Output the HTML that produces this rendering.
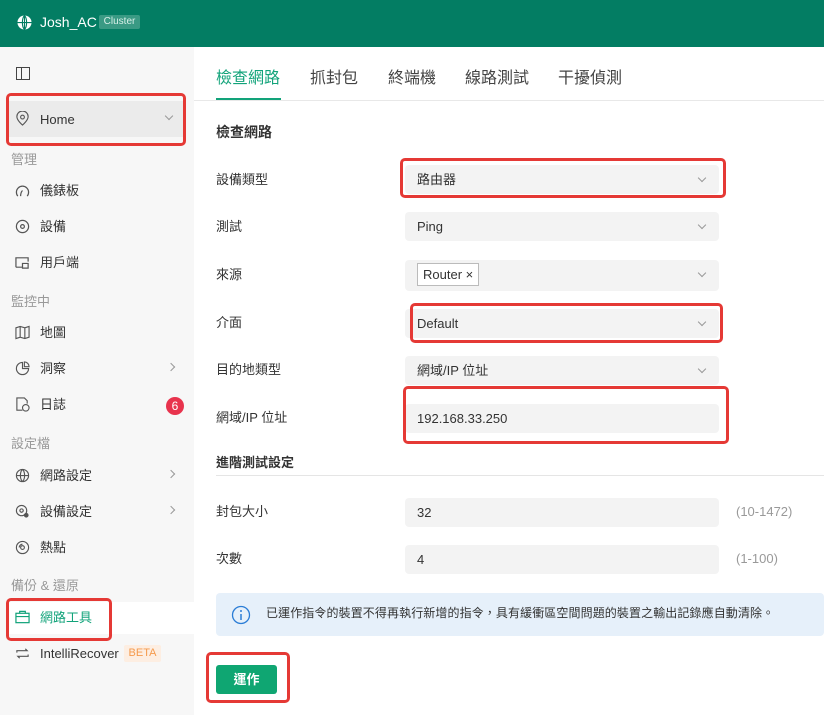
<!DOCTYPE html>
<html><head><meta charset="utf-8"><style>
*{box-sizing:border-box;margin:0;padding:0}
body{width:824px;height:715px;overflow:hidden;font-family:"Liberation Sans","Noto Sans CJK TC",sans-serif;color:#333;background:#fff;position:relative;font-size:13px;line-height:15px}
.a{position:absolute;white-space:nowrap}
.hdr{left:0;top:0;width:824px;height:47px;background:#037d63;color:#fff}
.side{left:0;top:47px;width:194px;height:668px;background:#f7f7f7}
.grp{left:11px;color:#999;font-size:13px}
.it{left:40px;font-size:13px;color:#333}
.ic{left:15px;width:15px;height:15px}
.red{border:3px solid #e53935;border-radius:5px}
.lbl{left:216px;font-size:13px;color:#333}
.fld{left:405px;width:314px;height:29px;background:#f3f3f3;border-radius:4px;padding:0 12px;line-height:29px;font-size:13px;color:#333}
.dd::after{content:"";position:absolute;right:14px;top:10px;width:5px;height:5px;border-right:1px solid #999;border-bottom:1px solid #999;transform:rotate(45deg)}
.tab{top:71px;font-size:16px;color:#444}
</style></head><body>
<div class="a hdr">
 <svg class="a" style="left:17px;top:15px" width="15" height="15" viewBox="0 0 16 16"><circle cx="8" cy="8" r="7.5" fill="#fff"/><path d="M8 .5v15M.5 8h15M8 .5c-3 3-3 12 0 15M8 .5c3 3 3 12 0 15" stroke="#037d63" stroke-width="1.2" fill="none"/></svg>
 <div class="a" style="left:40px;top:15px;font-size:14px">Josh_AC</div>
 <div class="a" style="left:99px;top:15px;height:14px;width:41px;background:#3a9a84;border-radius:2px;font-size:10px;line-height:14px;text-align:center;color:#d8efe8;display:flex;align-items:center;justify-content:center">Cluster</div>
</div>
<div class="a side"></div>
<svg class="a" style="left:16px;top:67px" width="14" height="13"><rect x=".5" y=".5" width="13" height="12" fill="none" stroke="#444"/><line x1="5.5" y1="0" x2="5.5" y2="13" stroke="#444"/></svg>
<div class="a" style="left:9px;top:101px;width:174px;height:36px;background:#ebebeb"></div>
<svg class="a ic" style="top:111px" viewBox="0 0 16 16"><path d="M8 15s-6-5-6-9a6 6 0 0112 0c0 4-6 9-6 9z" fill="none" stroke="#555" stroke-width="1.2"/><circle cx="8" cy="6.5" r="2" fill="none" stroke="#555" stroke-width="1.2"/></svg>
<div class="a it" style="top:112px">Home</div>
<div class="a" style="left:166px;top:113px;width:6px;height:6px;border-right:1px solid #999;border-bottom:1px solid #999;transform:rotate(45deg)"></div>
<div class="a red" style="left:6px;top:93px;width:180px;height:53px"></div>
<div class="a grp" style="top:152px">管理</div>
<svg class="a ic" style="top:183px" viewBox="0 0 16 16"><path d="M3 14A6.5 6.5 0 1113 14M6 14c0-3 1-5 2-6" fill="none" stroke="#555" stroke-width="1.3"/></svg><div class="a it" style="top:183px">儀錶板</div>
<svg class="a ic" style="top:219px" viewBox="0 0 16 16"><circle cx="8" cy="8" r="6.5" fill="none" stroke="#555" stroke-width="1.3"/><circle cx="8" cy="8" r="2" fill="none" stroke="#555" stroke-width="1.3"/></svg><div class="a it" style="top:219px">設備</div>
<svg class="a ic" style="top:255px" viewBox="0 0 16 16"><path d="M1 13V3h13v4M1 13h7M8 9h6v5H8z" fill="none" stroke="#555" stroke-width="1.3"/></svg><div class="a it" style="top:255px">用戶端</div>
<div class="a grp" style="top:294px">監控中</div>
<svg class="a ic" style="top:325px" viewBox="0 0 16 16"><path d="M1 3l4.5-1.5 5 1.5 4.5-1.5v11.5l-4.5 1.5-5-1.5L1 14.5zM5.5 1.5v11.5M10.5 3v11.5" fill="none" stroke="#555" stroke-width="1.2"/></svg><div class="a it" style="top:325px">地圖</div>
<svg class="a ic" style="top:361px" viewBox="0 0 16 16"><path d="M8 1.5A6.5 6.5 0 1014.5 8H8z" fill="none" stroke="#555" stroke-width="1.2"/><path d="M10 1v5h5a5 5 0 00-5-5z" fill="none" stroke="#555" stroke-width="1.2"/></svg><div class="a it" style="top:361px">洞察</div>
<div class="a" style="left:168px;top:364px;width:6px;height:6px;border-right:1px solid #999;border-top:1px solid #999;transform:rotate(45deg)"></div>
<svg class="a ic" style="top:397px" viewBox="0 0 16 16"><path d="M8 14H2V1h8l3 3v3" fill="none" stroke="#555" stroke-width="1.2"/><circle cx="11.5" cy="11.5" r="3.5" fill="none" stroke="#555" stroke-width="1.2"/></svg><div class="a it" style="top:397px">日誌</div>
<div class="a" style="left:166px;top:397px;width:18px;height:18px;border-radius:9px;background:#e8334d;color:#fff;font-size:12px;text-align:center;line-height:18px">6</div>
<div class="a grp" style="top:436px">設定檔</div>
<svg class="a ic" style="top:468px" viewBox="0 0 16 16"><circle cx="8" cy="8" r="6.5" fill="none" stroke="#555" stroke-width="1.2"/><path d="M1.5 8h13M8 1.5c-3 3-3 10 0 13M8 1.5c3 3 3 10 0 13" fill="none" stroke="#555" stroke-width="1.2"/></svg><div class="a it" style="top:468px">網路設定</div>
<div class="a" style="left:168px;top:471px;width:6px;height:6px;border-right:1px solid #999;border-top:1px solid #999;transform:rotate(45deg)"></div>
<svg class="a ic" style="top:504px" viewBox="0 0 16 16"><circle cx="7" cy="7" r="5.5" fill="none" stroke="#555" stroke-width="1.2"/><circle cx="7" cy="7" r="1.8" fill="none" stroke="#555" stroke-width="1.2"/><circle cx="12" cy="12" r="2.5" fill="#555"/></svg><div class="a it" style="top:504px">設備設定</div>
<div class="a" style="left:168px;top:507px;width:6px;height:6px;border-right:1px solid #999;border-top:1px solid #999;transform:rotate(45deg)"></div>
<svg class="a ic" style="top:540px" viewBox="0 0 16 16"><circle cx="8" cy="8" r="6.5" fill="none" stroke="#555" stroke-width="1.2"/><circle cx="8" cy="8" r="2" fill="none" stroke="#555" stroke-width="1.2"/><path d="M4.5 8a3.5 3.5 0 013.5-3.5" fill="none" stroke="#555" stroke-width="1.2"/></svg><div class="a it" style="top:540px">熱點</div>
<div class="a grp" style="top:578px">備份 &amp; 還原</div>
<div class="a" style="left:9px;top:602px;width:185px;height:32px;background:#fff"></div>
<svg class="a ic" style="top:610px" viewBox="0 0 16 16"><rect x="1" y="3.5" width="14" height="10" fill="none" stroke="#12a37a" stroke-width="1.3"/><path d="M5 3.5V1.5h6v2M1 7h14" fill="none" stroke="#12a37a" stroke-width="1.3"/></svg>
<div class="a it" style="top:610px;color:#12a37a">網路工具</div>
<div class="a red" style="left:6px;top:598px;width:106px;height:43px"></div>
<svg class="a ic" style="top:646px" viewBox="0 0 16 16"><path d="M2 7V5h11l-2-2M14 9v2H3l2 2" fill="none" stroke="#555" stroke-width="1.2"/></svg>
<div class="a it" style="top:646px">IntelliRecover</div>
<div class="a" style="left:124px;top:645px;width:37px;height:17px;background:#fdeee2;border-radius:2px;color:#f59a4c;font-size:11px;text-align:center;line-height:17px">BETA</div>

<div class="a tab" style="left:216px;color:#12a37a">檢查網路</div>
<div class="a tab" style="left:310px">抓封包</div>
<div class="a tab" style="left:388px">終端機</div>
<div class="a tab" style="left:465px">線路測試</div>
<div class="a tab" style="left:558px">干擾偵測</div>
<div class="a" style="left:194px;top:100px;width:630px;height:1px;background:#e8e8e8"></div>
<div class="a" style="left:216px;top:98px;width:65px;height:2px;background:#12a37a"></div>
<div class="a" style="left:216px;top:125px;font-size:14px;font-weight:bold;color:#333">檢查網路</div>

<div class="a lbl" style="top:172px">設備類型</div><div class="a fld dd" style="top:165px">路由器</div>
<div class="a red" style="left:400px;top:158px;width:326px;height:40px"></div>
<div class="a lbl" style="top:219px">測試</div><div class="a fld dd" style="top:212px">Ping</div>
<div class="a lbl" style="top:267px">來源</div><div class="a fld dd" style="top:260px;height:31px"><span style="display:inline-block;border:1px solid #bbb;background:#fff;height:23px;line-height:21px;padding:0 5px;margin-top:3px;vertical-align:top">Router ×</span></div>
<div class="a lbl" style="top:315px">介面</div><div class="a fld dd" style="top:309px">Default</div>
<div class="a red" style="left:410px;top:303px;width:313px;height:40px"></div>
<div class="a lbl" style="top:362px">目的地類型</div><div class="a fld dd" style="top:356px">網域/IP 位址</div>
<div class="a lbl" style="top:410px">網域/IP 位址</div><div class="a fld" style="top:404px">192.168.33.250</div>
<div class="a red" style="left:403px;top:386px;width:326px;height:58px"></div>
<div class="a" style="left:216px;top:455px;font-size:13px;font-weight:bold">進階測試設定</div>
<div class="a" style="left:216px;top:475px;width:608px;height:1px;background:#e5e5e5"></div>
<div class="a lbl" style="top:504px">封包大小</div><div class="a fld" style="top:498px">32</div>
<div class="a" style="left:736px;top:504px;color:#999">(10-1472)</div>
<div class="a lbl" style="top:551px">次數</div><div class="a fld" style="top:545px">4</div>
<div class="a" style="left:736px;top:551px;color:#999">(1-100)</div>
<div class="a" style="left:216px;top:593px;width:608px;height:43px;background:#e6f0fa;border-radius:4px"></div>
<svg class="a" style="left:231px;top:605px" width="20" height="20" viewBox="0 0 20 20"><circle cx="10" cy="10" r="8.5" fill="none" stroke="#2b7dd6" stroke-width="1.3"/><circle cx="10" cy="6" r="1" fill="#2b7dd6"/><path d="M10 9v6" stroke="#2b7dd6" stroke-width="1.5"/></svg>
<div class="a" style="left:266px;top:606px;font-size:12px;letter-spacing:0.1px;color:#333">已運作指令的裝置不得再執行新增的指令，具有緩衝區空間問題的裝置之輸出記錄應自動清除。</div>
<div class="a" style="left:216px;top:665px;width:61px;height:29px;background:#0fa672;border-radius:3px;color:#fff;font-weight:bold;text-align:center;line-height:29px">運作</div>
<div class="a red" style="left:206px;top:652px;width:84px;height:51px"></div>
</body></html>
